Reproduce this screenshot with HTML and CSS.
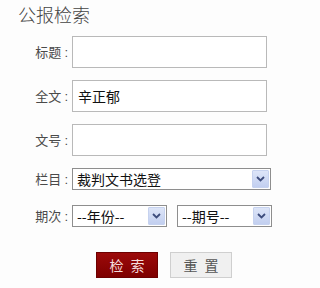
FILE: index.html
```html
<!DOCTYPE html>
<html lang="zh-CN">
<head>
<meta charset="utf-8">
<title>公报检索</title>
<link rel="stylesheet" href="styles.css">
</head>
<body>
<div class="page">
  <div class="title">公报检索</div>
  <form class="form">
    <div class="row">
      <label class="label">标题<span class="colon">:</span></label>
      <input class="text" type="text" value="">
    </div>
    <div class="row">
      <label class="label">全文<span class="colon">:</span></label>
      <input class="text" type="text" value="辛正郁">
    </div>
    <div class="row">
      <label class="label">文号<span class="colon">:</span></label>
      <input class="text" type="text" value="">
    </div>
    <div class="row row-sel">
      <label class="label">栏目<span class="colon">:</span></label>
      <div class="sel sel-wide">
        <select><option>裁判文书选登</option></select>
        <span class="arrow"><svg width="9" height="6" viewBox="0 0 9 6"><path d="M1 1 L4.5 4.5 L8 1" fill="none" stroke="#3d4c7c" stroke-width="1.8"/></svg></span>
      </div>
    </div>
    <div class="row row-sel2">
      <label class="label">期次<span class="colon">:</span></label>
      <div class="sel sel-half">
        <select><option>--年份--</option></select>
        <span class="arrow"><svg width="9" height="6" viewBox="0 0 9 6"><path d="M1 1 L4.5 4.5 L8 1" fill="none" stroke="#3d4c7c" stroke-width="1.8"/></svg></span>
      </div>
      <div class="sel sel-half">
        <select><option>--期号--</option></select>
        <span class="arrow"><svg width="9" height="6" viewBox="0 0 9 6"><path d="M1 1 L4.5 4.5 L8 1" fill="none" stroke="#3d4c7c" stroke-width="1.8"/></svg></span>
      </div>
    </div>
    <div class="buttons">
      <button type="button" class="btn btn-search">检 索</button>
      <button type="button" class="btn btn-reset">重 置</button>
    </div>
  </form>
</div>
</body>
</html>
```
FILE: styles.css
```css
html, body {
  margin: 0;
  padding: 0;
  background: #fdfdfd;
}
body {
  font-family: "Noto Sans CJK SC", "Noto Sans", sans-serif;
  color: #444;
}
.page {
  width: 288px;
  height: 288px;
  overflow: hidden;
}
.title {
  padding: 2px 0 0 18px;
  height: 24px;
  font-size: 18px;
  font-weight: 300;
  line-height: 24px;
  color: #444;
}
.form {
  margin: 10px 0 0 0;
  display: flex;
  flex-direction: column;
  gap: 12px;
}
.row {
  display: flex;
  align-items: center;
}
.label {
  width: 68px;
  flex: none;
  text-align: right;
  font-size: 13px;
  line-height: 16px;
  color: #4a4a4a;
  margin-right: 4px;
}
.colon {
  font-family: "Liberation Sans", sans-serif;
  margin-left: 3px;
}
.text {
  box-sizing: border-box;
  width: 195px;
  height: 32px;
  margin: 0;
  padding: 0 0 0 5px;
  border: 1px solid #b9b9b9;
  background: #fff;
  font-family: "Noto Sans CJK SC", sans-serif;
  font-size: 14px;
  color: #111;
  outline: none;
}
.sel {
  box-sizing: border-box;
  height: 22px;
  display: flex;
  align-items: stretch;
  border: 1px solid #8e8e8e;
  background: #fff;
  padding: 1px;
}
.sel select {
  flex: 1;
  min-width: 0;
  -webkit-appearance: none;
  appearance: none;
  border: none;
  background: transparent;
  margin: 0;
  padding: 0 0 0 3px;
  font-family: "Noto Sans CJK SC", sans-serif;
  font-size: 14px;
  line-height: 18px;
  color: #111;
  outline: none;
}
.arrow {
  flex: none;
  width: 17px;
  display: flex;
  align-items: center;
  justify-content: center;
  background: linear-gradient(#dde5f8, #c2cff0);
  border: 1px solid #c6d2ef;
  box-sizing: border-box;
  border-radius: 1px;
}
.sel-wide {
  width: 199px;
}
.row-sel2 {
  margin-top: 3px;
}
.sel-half {
  width: 95px;
}
.sel-half + .sel-half {
  margin-left: 10px;
}
.buttons {
  display: flex;
  gap: 12px;
  padding-left: 96px;
  margin-top: 13px;
}
.btn {
  box-sizing: border-box;
  width: 62px;
  height: 26px;
  margin: 0;
  padding: 0;
  font-family: "Noto Sans CJK SC", sans-serif;
  font-size: 14px;
  line-height: 24px;
  letter-spacing: 2px;
  text-indent: 2px;
}
.btn-search {
  background: linear-gradient(#9c0a0a, #7e0000);
  border: 1px solid #6d0000;
  color: #f4dede;
}
.btn-reset {
  background: #f0f0f0;
  border: 1px solid #cfcfcf;
  color: #555;
}
```
